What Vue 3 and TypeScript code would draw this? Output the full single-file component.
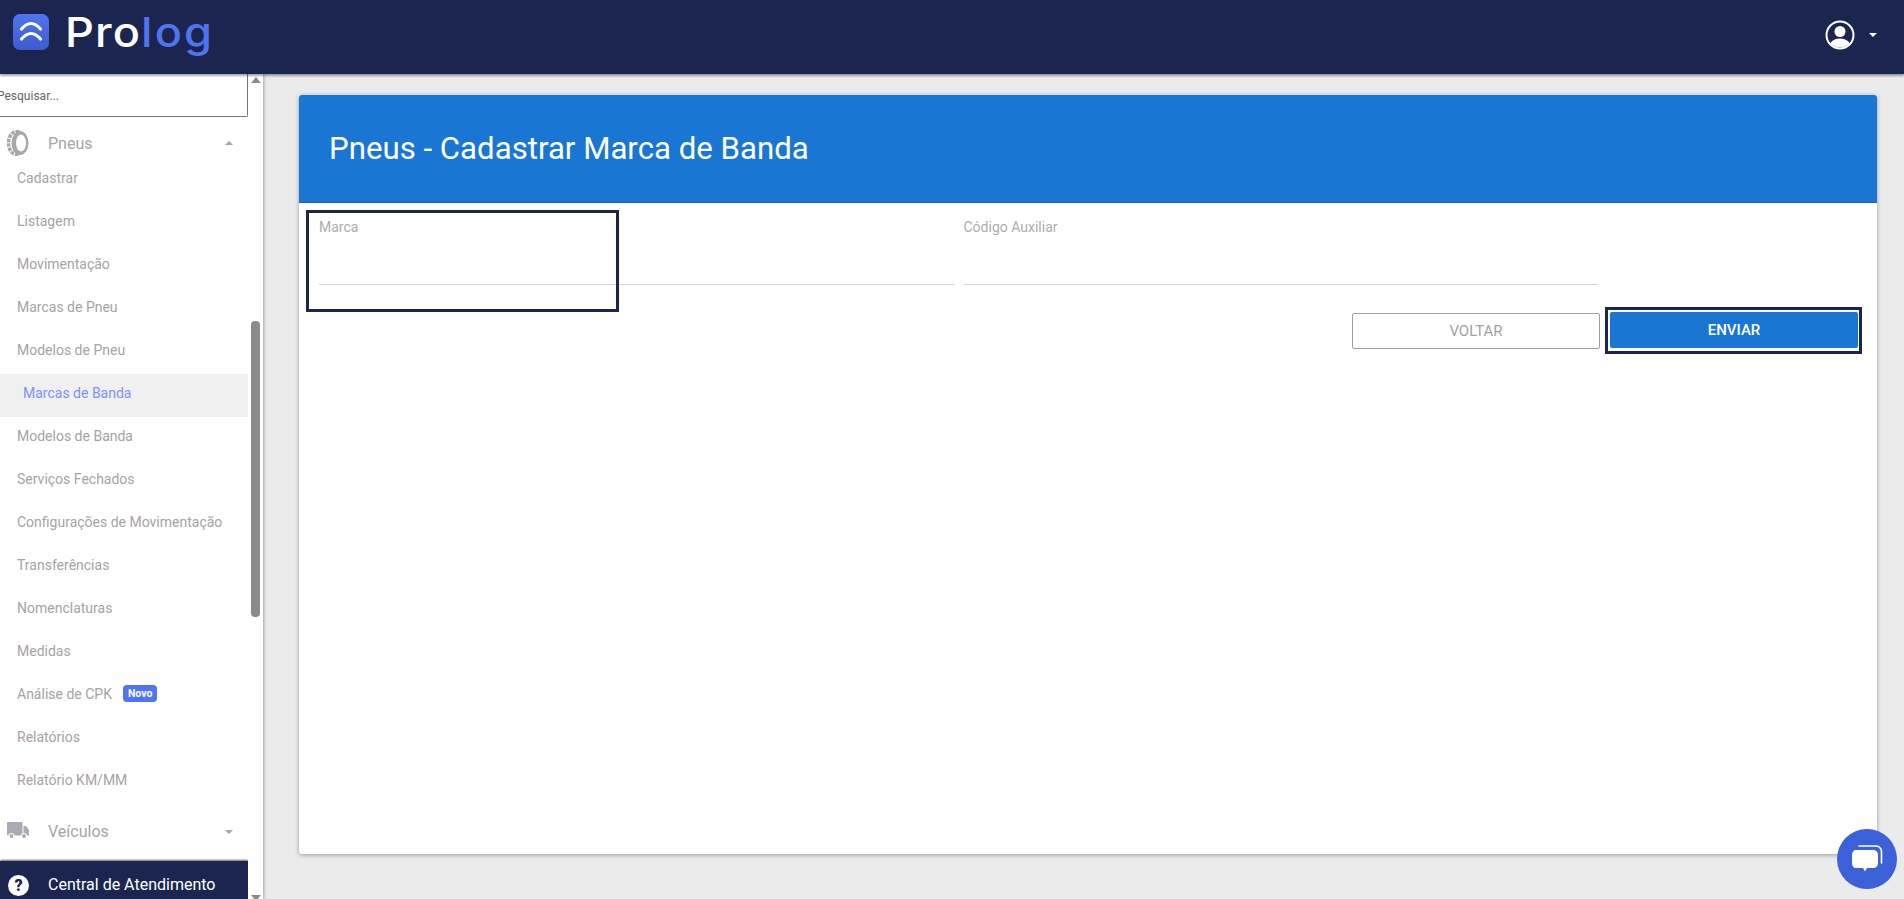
<script setup lang="ts">
const items: { label: string; active?: boolean; badge?: string }[] = [
  { label: 'Cadastrar' },
  { label: 'Listagem' },
  { label: 'Movimentação' },
  { label: 'Marcas de Pneu' },
  { label: 'Modelos de Pneu' },
  { label: 'Marcas de Banda', active: true },
  { label: 'Modelos de Banda' },
  { label: 'Serviços Fechados' },
  { label: 'Configurações de Movimentação' },
  { label: 'Transferências' },
  { label: 'Nomenclaturas' },
  { label: 'Medidas' },
  { label: 'Análise de CPK', badge: 'Novo' },
  { label: 'Relatórios' },
  { label: 'Relatório KM/MM' },
]
</script>

<template>
  <div class="page">
    <header class="topbar">
      <div class="brand">
        <svg class="logo-mark" width="36" height="36" viewBox="0 0 36 36">
          <defs>
            <linearGradient id="lg" x1="0" y1="0" x2="0" y2="1">
              <stop offset="0" stop-color="#4f74ee" />
              <stop offset="1" stop-color="#3f5bd0" />
            </linearGradient>
          </defs>
          <rect width="36" height="36" rx="7" fill="url(#lg)" />
          <path d="M8.500 15 Q18 4 27.500 15 M8.500 25 Q18 14 27.500 25" fill="none" stroke="#fff" stroke-width="3.200" stroke-linecap="round" />
        </svg>
        <span class="wordmark"><span class="pro">Pro</span><span class="log">log</span></span>
      </div>
      <div class="user">
        <svg width="30" height="30" viewBox="0 0 30 30">
          <defs>
            <clipPath id="uc"><circle cx="15" cy="15" r="12.500" /></clipPath>
          </defs>
          <circle cx="15" cy="11.500" r="5.500" fill="#fff" />
          <ellipse cx="15" cy="26" rx="10.500" ry="7.500" fill="#fff" clip-path="url(#uc)" />
          <circle cx="15" cy="15" r="13.500" fill="none" stroke="#fff" stroke-width="2" />
        </svg>
        <span class="caret-white"></span>
      </div>
    </header>

    <div class="body">
      <aside class="sidebar">
        <div class="side-scroll">
          <div class="search">Pesquisar...</div>
          <div class="group">
            <svg class="group-icon" width="22" height="26" viewBox="0 0 22 26">
              <ellipse cx="9.500" cy="13" rx="8" ry="11.500" fill="none" stroke="#a8a8a8" stroke-width="3.500" stroke-dasharray="3.500 1" />
              <ellipse cx="13" cy="13" rx="8.500" ry="12" fill="#a8a8a8" />
              <ellipse cx="14" cy="13" rx="5" ry="8.500" fill="#fff" />
            </svg>
            <span class="group-label">Pneus</span>
            <span class="caret up"></span>
          </div>
          <ul class="menu">
            <li v-for="item in items" :key="item.label" class="menu-item" :class="{ active: item.active }">
              <span>{{ item.label }}</span>
              <span v-if="item.badge" class="badge">{{ item.badge }}</span>
            </li>
          </ul>
          <div class="group vehicles">
            <svg class="group-icon" width="22" height="18" viewBox="0 0 22 18">
              <rect x="0" y="0" width="15.500" height="13.500" rx="1" fill="#a9abb3" />
              <path d="M16.500 4h2.500L22 8v5.500h-5.500z" fill="#a9abb3" />
              <circle cx="4.500" cy="14" r="2.500" fill="#a9abb3" stroke="#fff" stroke-width="1.200" />
              <circle cx="17" cy="14" r="2.500" fill="#a9abb3" stroke="#fff" stroke-width="1.200" />
            </svg>
            <span class="group-label">Veículos</span>
            <span class="caret"></span>
          </div>
          <div class="help">
            <span class="help-icon">?</span>
            <span class="help-text">Central de Atendimento</span>
          </div>
        </div>
        <div class="scrollbar">
          <span class="arrow up"></span>
          <span class="thumb"></span>
          <span class="arrow down"></span>
        </div>
      </aside>

      <main class="content">
        <section class="card">
          <div class="card-head">
            <h1>Pneus - Cadastrar Marca de Banda</h1>
          </div>
          <div class="form">
            <div class="fields">
              <label class="field">
                <span class="field-label">Marca</span>
                <span class="field-line"></span>
              </label>
              <label class="field">
                <span class="field-label">Código Auxiliar</span>
                <span class="field-line"></span>
              </label>
            </div>
            <span class="focus-box"></span>
            <div class="actions">
              <button class="btn ghost" type="button">VOLTAR</button>
              <span class="focus-ring">
                <button class="btn primary" type="button">ENVIAR</button>
              </span>
            </div>
          </div>
        </section>
      </main>
    </div>

    <div class="chat">
      <svg width="34" height="32" viewBox="0 0 34 32">
        <path d="M9 3h16c4 0 6 1.500 6.500 5v12" fill="none" stroke="#fff" stroke-width="1.600" stroke-linecap="round" />
        <path d="M6 7h17c3 0 5 2 5 5v8c0 3-2 5-5 5h-6l-2 3.500-2-3.500H6c-2.500 0-4-2-4-5v-8c0-3 1.500-5 4-5z" fill="#fff" />
      </svg>
    </div>
  </div>
</template>

<style>
html, body { margin: 0; overflow: hidden; }
</style>

<style scoped>
.page {
  width: 1904px;
  height: 899px;
  display: flex;
  flex-direction: column;
  position: relative;
  background: #ebebeb;
  font-family: Roboto, "Liberation Sans", sans-serif;
  overflow: hidden;
}
.topbar {
  height: 74px;
  flex: none;
  background: #1b254f;
  box-shadow: 0 2px 2px rgba(0, 0, 0, .35);
  display: flex;
  align-items: center;
  justify-content: space-between;
  padding: 0 27px 0 13px;
  position: relative;
  z-index: 3;
}
.brand { display: flex; align-items: center; gap: 16px; margin-bottom: 10px; }
.logo-mark { display: block; }
.wordmark {
  font-family: Inter, sans-serif;
  font-size: 41px;
  letter-spacing: 1px;
  line-height: 1;
  font-weight: 500;
  transform: scaleX(1.1);
  transform-origin: left center;
}
.pro { color: #fff; }
.log { color: #4f74ee; letter-spacing: 2px; }
.user { display: flex; align-items: center; gap: 14px; margin-bottom: 4px; }
.caret-white {
  width: 0;
  border: 4px solid transparent;
  border-top-color: #fff;
  border-bottom: 0;
}
.body { flex: 1; display: flex; min-height: 0; }
.sidebar {
  width: 263px;
  flex: none;
  background: #fff;
  display: flex;
  box-shadow: 1px 0 3px rgba(0, 0, 0, .3);
  position: relative;
  z-index: 2;
}
.side-scroll { width: 248px; flex: none; overflow: hidden; }
.search {
  height: 43px;
  box-sizing: border-box;
  margin-left: -6px;
  border: 1px solid #777;
  border-top: 0;
  border-radius: 0 0 2px 2px;
  font-size: 12px;
  line-height: 44px;
  padding-left: 2px;
  color: #666;
}
.group {
  height: 52px;
  display: flex;
  align-items: center;
  position: relative;
  padding-left: 48px;
}
.group-icon { position: absolute; left: 7px; top: 50%; transform: translateY(-50%); }
.group-label { font-size: 16px; color: #a5a5a5; }
.caret {
  position: absolute;
  right: 15px;
  top: 24px;
  width: 0;
  border: 4px solid transparent;
  border-top-color: #a5a5a5;
  border-bottom: 0;
}
.caret.up {
  border-top: 0;
  border-bottom: 4px solid #a5a5a5;
}
.menu { list-style: none; margin: -10px 0 0; padding: 0; }
.menu-item {
  height: 43px;
  box-sizing: border-box;
  padding: 0 0 6px 17px;
  display: flex;
  align-items: center;
  font-size: 14px;
  color: #a8a2a2;
}
.menu-item.active {
  background: #f0f0f0;
  color: #7b92ff;
  padding-left: 23px;
}
.badge {
  margin-left: 11px;
  background: #4f74f5;
  color: #fff;
  font-size: 10.500px;
  font-weight: 700;
  border-radius: 4px;
  padding: 2px 5px;
  line-height: 13px;
}
.vehicles { height: 54px; }
.vehicles .caret { top: 26px; }
.help {
  height: 38px;
  box-sizing: border-box;
  margin-top: 3px;
  padding: 9px 0 0 48px;
  background: #1b254f;
  box-shadow: 0 -1px 2px rgba(0, 0, 0, .5), 2px 0 2px rgba(0, 0, 0, .4);
  display: flex;
  align-items: center;
  position: relative;
}
.help-icon {
  position: absolute;
  left: 8px;
  top: 14px;
  width: 21px;
  height: 21px;
  border-radius: 50%;
  background: #fff;
  color: #1b254f;
  font-size: 16px;
  font-weight: 900;
  line-height: 21px;
  text-align: center;
}
.help-text { color: #fff; font-size: 16px; }
.scrollbar {
  width: 15px;
  flex: none;
  position: relative;
  background: #fff;
}
.arrow {
  position: absolute;
  left: 2.500px;
  width: 0;
  border: 5px solid transparent;
}
.arrow.up { top: 3px; border-top: 0; border-bottom: 6px solid #8b8b8b; }
.arrow.down { bottom: -2px; border-bottom: 0; border-top: 6px solid #8b8b8b; }
.thumb {
  position: absolute;
  left: 3px;
  top: 247px;
  width: 9px;
  height: 296px;
  background: #8b8b8b;
  border-radius: 4px;
}
.content { flex: 1; padding: 21px 27px 0 36px; min-width: 0; }
.card {
  height: 759px;
  background: #fff;
  border-radius: 3px;
  box-shadow: 0 1px 4px rgba(0, 0, 0, .35);
  overflow: hidden;
}
.card-head {
  height: 108px;
  background: #1976d2;
  display: flex;
  align-items: center;
  padding-left: 30px;
  border-bottom: 1px solid #1568b8;
  box-sizing: border-box;
}
h1 {
  margin: 0;
  font-size: 31.200px;
  font-weight: 400;
  color: #fff;
}
.form { position: relative; padding: 14px 10px 0 20px; }
.fields { display: flex; gap: 10px; width: 1279px; }
.field { flex: 1; display: block; }
.field-label { display: block; font-size: 14px; line-height: 20px; color: #adadad; height: 67px; }
.field-line { display: block; height: 1px; background: #d2d2d2; }
.focus-box {
  position: absolute;
  left: 7px;
  top: 7px;
  width: 313px;
  height: 102px;
  box-sizing: border-box;
  border: 3px solid #1b254f;
}
.actions {
  display: flex;
  justify-content: flex-end;
  align-items: center;
  gap: 5px;
  margin-top: 22px;
  width: 1543px;
  box-sizing: border-box;
}
.btn {
  box-sizing: border-box;
  font-family: inherit;
  font-size: 15px;
  font-weight: 500;
  border-radius: 2px;
  padding: 0;
  width: 248px;
  height: 36px;
}
.ghost {
  background: #fff;
  border: 1px solid #9e9e9e;
  color: #a3a3a3;
  font-weight: 400;
}
.focus-ring {
  display: block;
  box-sizing: border-box;
  height: 47px;
  padding: 2px 1px 3px 2px;
  border: 3px solid #1b254f;
}
.primary {
  display: block;
  background: #1976d2;
  color: #fff;
  border: 0;
}
.chat {
  position: absolute;
  right: 7px;
  bottom: 10px;
  width: 60px;
  height: 60px;
  border-radius: 50%;
  background: #3b60d8;
  display: flex;
  align-items: center;
  justify-content: center;
}
</style>
